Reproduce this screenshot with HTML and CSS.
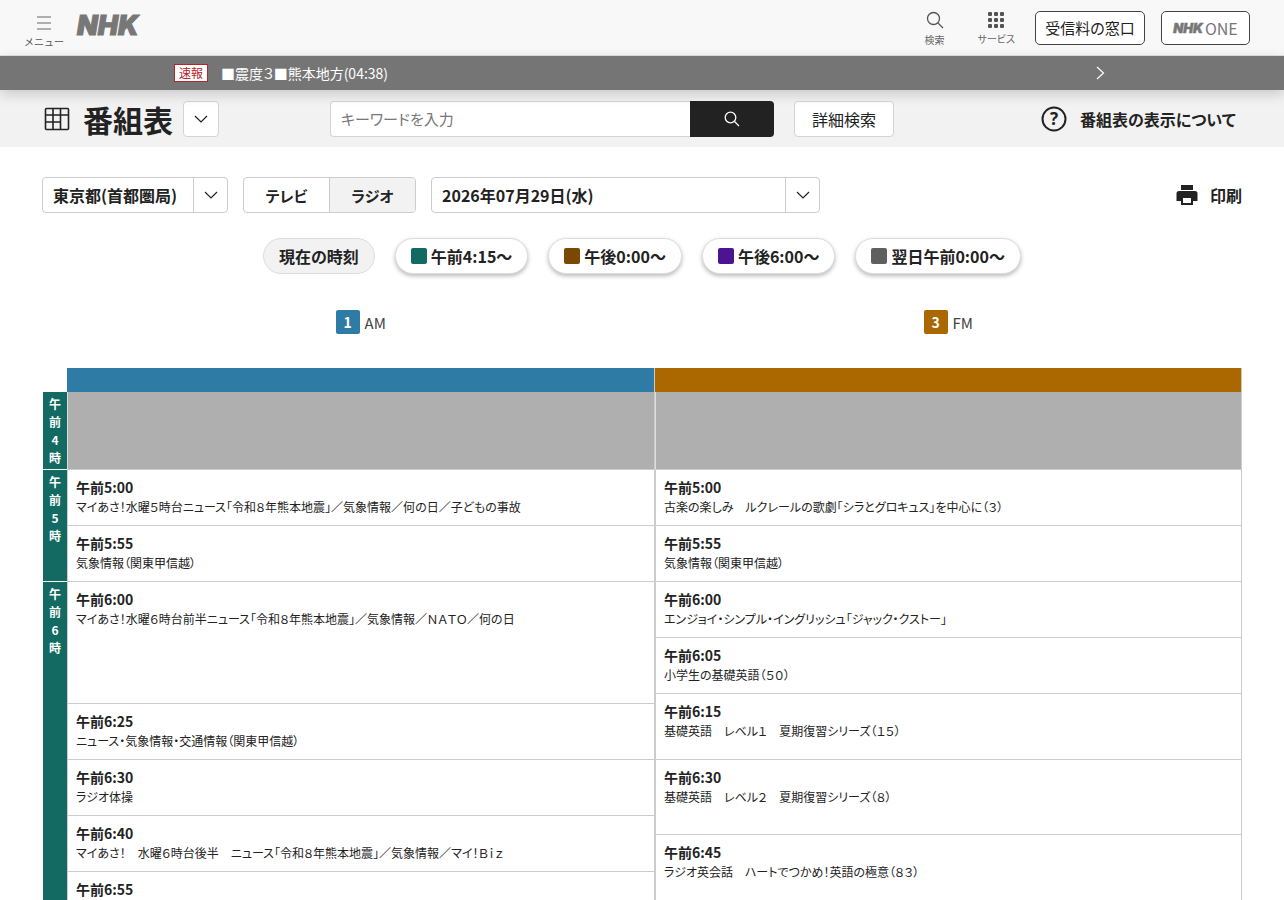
FILE: index.html
```html
<!DOCTYPE html>
<html lang="ja">
<head>
    <meta charset="UTF-8">
    <meta name="viewport" content="width=device-width, initial-scale=1.0">
    <title>番組表</title>
    <link rel="stylesheet" href="styles.css">
</head>
<body>
    <header class="site-header">
        <div class="header-left">
            <button class="menu-btn">
                <svg width="16" height="16" viewBox="0 0 16 16" fill="none" stroke="#666" stroke-width="1.2"><path d="M1 2h14M1 8h14M1 14h14"/></svg>
                <span>メニュー</span>
            </button>
            <span class="nhk-logo">NHK</span>
        </div>
        <div class="header-right">
            <div class="head-icon">
                <svg width="18" height="18" viewBox="0 0 18 18" fill="none" stroke="#555" stroke-width="1.3"><circle cx="7.5" cy="7.5" r="6"/><path d="M12 12l5 5"/></svg>
                <span>検索</span>
            </div>
            <div class="head-icon">
                <svg width="16" height="16" viewBox="0 0 16 16" fill="#555"><rect x="0" y="0" width="4" height="4" rx="1"/><rect x="6" y="0" width="4" height="4" rx="1"/><rect x="12" y="0" width="4" height="4" rx="1"/><rect x="0" y="6" width="4" height="4" rx="1"/><rect x="6" y="6" width="4" height="4" rx="1"/><rect x="12" y="6" width="4" height="4" rx="1"/><rect x="0" y="12" width="4" height="4" rx="1"/><rect x="6" y="12" width="4" height="4" rx="1"/><rect x="12" y="12" width="4" height="4" rx="1"/></svg>
                <span>サービス</span>
            </div>
            <a class="head-btn fee-btn">受信料の窓口</a>
            <a class="head-btn one-btn"><span class="nhk-small">NHK</span><span>ONE</span></a>
        </div>
    </header>

    <div class="news-bar">
        <span class="news-label">速報</span>
        <span class="news-text">■震度３■熊本地方(04:38)</span>
        <svg class="news-arrow" width="9" height="14" viewBox="0 0 9 14" fill="none" stroke="#fff" stroke-width="1.2"><path d="M1 1l6.500 6-6.500 6"/></svg>
    </div>

    <section class="title-bar">
        <div class="title-left">
            <svg width="26" height="24" viewBox="0 0 26 24" fill="none" stroke="#222" stroke-width="1.600"><rect x="1.500" y="1.500" width="23" height="21" rx="1"/><path d="M1.500 8h23M1.500 15h15M9 1.500v21M16.500 1.500v21"/></svg>
            <h1>番組表</h1>
            <button class="square-btn">
                <svg width="14" height="8" viewBox="0 0 14 8" fill="none" stroke="#222" stroke-width="1.200"><path d="M1 1l6 6 6-6"/></svg>
            </button>
        </div>
        <div class="search-box">
            <input type="text" placeholder="キーワードを入力">
            <button class="search-submit">
                <svg width="16" height="16" viewBox="0 0 16 16" fill="none" stroke="#fff" stroke-width="1.300"><circle cx="6.500" cy="6.500" r="5.300"/><path d="M10.500 10.500l4.500 4.500"/></svg>
            </button>
        </div>
        <button class="detail-btn">詳細検索</button>
        <div class="about-link">
            <svg width="26" height="26" viewBox="0 0 26 26"><circle cx="13" cy="13" r="11.500" fill="none" stroke="#222" stroke-width="2"/><text x="13" y="18.500" text-anchor="middle" class="about-mark">?</text></svg>
            <span>番組表の表示について</span>
        </div>
    </section>

    <main class="page-main">
        <div class="filters">
            <div class="select-box area-select">
                <span class="select-value">東京都(首都圏局)</span>
                <span class="select-arrow"><svg width="14" height="8" viewBox="0 0 14 8" fill="none" stroke="#222" stroke-width="1.200"><path d="M1 1l6 6 6-6"/></svg></span>
            </div>
            <div class="tabs">
                <span class="tab">テレビ</span>
                <span class="tab tab-active">ラジオ</span>
            </div>
            <div class="select-box date-select">
                <span class="select-value">2026年07月29日(水)</span>
                <span class="select-arrow"><svg width="14" height="8" viewBox="0 0 14 8" fill="none" stroke="#222" stroke-width="1.200"><path d="M1 1l6 6 6-6"/></svg></span>
            </div>
            <div class="print-link">
                <svg width="22" height="22" viewBox="0 0 22 22" fill="#222"><path d="M5 1h12v5H5z"/><path fill-rule="evenodd" d="M3 7h16a2.500 2.500 0 0 1 2.500 2.500V17H17v4H5v-4H.5V9.500A2.500 2.500 0 0 1 3 7zm4 7v5h8v-5z"/></svg>
                <span>印刷</span>
            </div>
        </div>

        <div class="time-jumps">
            <span class="pill pill-now">現在の時刻</span>
            <span class="pill"><i class="swatch swatch-morning"></i>午前4:15～</span>
            <span class="pill"><i class="swatch swatch-noon"></i>午後0:00～</span>
            <span class="pill"><i class="swatch swatch-evening"></i>午後6:00～</span>
            <span class="pill"><i class="swatch swatch-night"></i>翌日午前0:00～</span>
        </div>

        <div class="channel-names">
            <div class="channel-name"><span class="ch-badge ch-am">1</span>AM</div>
            <div class="channel-name"><span class="ch-badge ch-fm">3</span>FM</div>
        </div>

        <div class="schedule">
            <div class="hours">
                <div class="hour h-4"><span>午</span><span>前</span><span>4</span><span>時</span></div>
                <div class="hour h-5"><span>午</span><span>前</span><span>5</span><span>時</span></div>
                <div class="hour h-6"><span>午</span><span>前</span><span>6</span><span>時</span></div>
            </div>

            <div class="channel channel-am">
                <div class="channel-bar bar-am"></div>
                <div class="no-program"></div>
                <div class="program r56"><b>午前5:00</b><p>マイあさ！水曜５時台ニュース「令和８年熊本地震」／気象情報／何の日／子どもの事故</p></div>
                <div class="program r56"><b>午前5:55</b><p>気象情報（関東甲信越）</p></div>
                <div class="program r122"><b>午前6:00</b><p>マイあさ！水曜６時台前半ニュース「令和８年熊本地震」／気象情報／ＮＡＴＯ／何の日</p></div>
                <div class="program r56"><b>午前6:25</b><p>ニュース・気象情報・交通情報（関東甲信越）</p></div>
                <div class="program r56"><b>午前6:30</b><p>ラジオ体操</p></div>
                <div class="program r56"><b>午前6:40</b><p>マイあさ！　水曜６時台後半　ニュース「令和８年熊本地震」／気象情報／マイ！Ｂｉｚ</p></div>
                <div class="program r56"><b>午前6:55</b></div>
            </div>

            <div class="channel channel-fm">
                <div class="channel-bar bar-fm"></div>
                <div class="no-program"></div>
                <div class="program r56"><b>午前5:00</b><p>古楽の楽しみ　ルクレールの歌劇「シラとグロキュス」を中心に（３）</p></div>
                <div class="program r56"><b>午前5:55</b><p>気象情報（関東甲信越）</p></div>
                <div class="program r56"><b>午前6:00</b><p>エンジョイ・シンプル・イングリッシュ「ジャック・クストー」</p></div>
                <div class="program r56"><b>午前6:05</b><p>小学生の基礎英語（５０）</p></div>
                <div class="program r66"><b>午前6:15</b><p>基礎英語　レベル１　夏期復習シリーズ（１５）</p></div>
                <div class="program r75"><b>午前6:30</b><p>基礎英語　レベル２　夏期復習シリーズ（８）</p></div>
                <div class="program r75"><b>午前6:45</b><p>ラジオ英会話　ハートでつかめ！英語の極意（８３）</p></div>
            </div>
        </div>
    </main>
</body>
</html>
```

FILE: styles.css
```css
:root {
    --text: #222;
    --line: #ccc;
    --am: #2e7ca6;
    --fm: #ab6700;
    --morning: #136a62;
}

* {
    box-sizing: border-box;
    margin: 0;
    padding: 0;
}

html, body {
    height: 900px;
    overflow: hidden;
}

body {
    font-family: "Noto Sans CJK JP", "Noto Sans", sans-serif;
    font-feature-settings: "palt";
    color: var(--text);
    background-color: #fff;
}

/* header */
.site-header {
    display: flex;
    justify-content: space-between;
    align-items: center;
    height: 56px;
    padding: 0 34px 0 24px;
    background-color: #f8f8f8;
    border-bottom: 1px solid #e2e2e2;
}

.header-left {
    display: flex;
    align-items: center;
    gap: 13px;
}

.menu-btn {
    display: flex;
    flex-direction: column;
    align-items: center;
    gap: 5px;
    padding-top: 7px;
    border: none;
    background: none;
    font-family: inherit;
    font-size: 10px;
    line-height: 12px;
    color: #555;
}

.nhk-logo {
    font-family: "Inter", sans-serif;
    font-size: 27px;
    line-height: 30px;
    font-weight: 900;
    font-style: italic;
    letter-spacing: 0;
    color: #777;
    -webkit-text-stroke: 1px #777;
    margin-bottom: 3px;
}

.header-right {
    display: flex;
    align-items: center;
}

.head-icon {
    display: flex;
    flex-direction: column;
    align-items: center;
    gap: 4px;
    font-size: 10px;
    line-height: 14px;
    color: #666;
    padding-top: 3px;
}

.head-icon:nth-child(1) {
    margin-right: 33px;
}

.head-icon:nth-child(2) {
    margin-right: 20px;
}

.head-btn {
    display: flex;
    align-items: center;
    justify-content: center;
    height: 34px;
    background-color: #fff;
    border: 1px solid #444;
    border-radius: 5px;
    font-size: 15px;
}

.fee-btn {
    width: 110px;
    margin-right: 16px;
}

.one-btn {
    width: 89px;
    gap: 2px;
    color: #777;
    font-size: 16px;
}

.nhk-small {
    font-family: "Inter", sans-serif;
    font-size: 13px;
    font-weight: 900;
    font-style: italic;
    -webkit-text-stroke: 0.5px #777;
}

/* breaking news */
.news-bar {
    position: relative;
    z-index: 1;
    display: flex;
    align-items: center;
    height: 34px;
    padding-left: 174px;
    background-color: #757575;
    color: #fff;
    font-size: 14px;
    box-shadow: 0 4px 14px rgba(0, 0, 0, 0.18);
}

.news-label {
    width: 34px;
    height: 18px;
    margin-right: 13px;
    border: 1px solid #b3262b;
    background-color: #fff;
    color: #b3262b;
    font-size: 12px;
    line-height: 16px;
    text-align: center;
}

.news-arrow {
    position: absolute;
    left: 1096px;
    top: 10px;
}

/* title bar */
.title-bar {
    display: flex;
    align-items: center;
    height: 57px;
    padding-left: 44px;
    background-color: #f2f2f2;
}

.title-left {
    display: flex;
    align-items: center;
    width: 286px;
}

.title-left h1 {
    margin: 0 10px 0 13px;
    font-size: 30px;
    line-height: 40px;
    font-weight: 700;
}

.square-btn {
    display: flex;
    align-items: center;
    justify-content: center;
    width: 36px;
    height: 36px;
    background-color: #fff;
    border: 1px solid #d4d4d4;
    border-radius: 4px;
}

.search-box {
    display: flex;
    width: 444px;
    height: 36px;
}

.search-box input {
    flex: 1;
    min-width: 0;
    padding: 0 10px;
    border: 1px solid #d4d4d4;
    border-right: none;
    border-radius: 4px 0 0 4px;
    font-family: inherit;
    font-feature-settings: "palt";
    font-size: 15px;
}

.search-box input::placeholder {
    color: #777;
}

.search-submit {
    display: flex;
    align-items: center;
    justify-content: center;
    width: 84px;
    border: none;
    background-color: #222;
    border-radius: 0 4px 4px 0;
}

.detail-btn {
    width: 100px;
    height: 36px;
    margin-left: 20px;
    background-color: #fff;
    border: 1px solid #d4d4d4;
    border-radius: 4px;
    font-family: inherit;
    font-feature-settings: "palt";
    font-size: 16px;
    color: var(--text);
}

.about-link {
    display: flex;
    align-items: center;
    gap: 13px;
    margin-left: 147px;
    font-size: 16px;
    font-weight: 700;
}

.about-mark {
    font-family: "Noto Sans", sans-serif;
    font-size: 17px;
    font-weight: 700;
    fill: #222;
}

/* filters */
.page-main {
    padding: 30px 42px 0 42px;
}

.filters {
    display: flex;
    align-items: center;
}

.select-box {
    display: flex;
    align-items: center;
    height: 36px;
    background-color: #fff;
    border: 1px solid #ccc;
    border-radius: 4px;
    font-size: 16px;
    font-weight: 700;
}

.select-value {
    flex: 1;
    padding-left: 10px;
}

.select-arrow {
    display: flex;
    align-items: center;
    justify-content: center;
    width: 34px;
    height: 100%;
    border-left: 1px solid #ccc;
}

.area-select {
    width: 186px;
    margin-right: 15px;
}

.date-select {
    width: 389px;
}

.tabs {
    display: flex;
    width: 173px;
    height: 36px;
    margin-right: 15px;
    border: 1px solid #ccc;
    border-radius: 4px;
    overflow: hidden;
    font-size: 15px;
    font-weight: 700;
}

.tab {
    display: flex;
    flex: 1;
    align-items: center;
    justify-content: center;
}

.tab-active {
    background-color: #f2f2f2;
    border-left: 1px solid #ccc;
}

.print-link {
    display: flex;
    align-items: center;
    gap: 12px;
    margin-left: auto;
    font-size: 16px;
    font-weight: 700;
}

.time-jumps {
    display: flex;
    justify-content: center;
    gap: 20px;
    margin-top: 25px;
}

.pill {
    display: flex;
    align-items: center;
    height: 36px;
    padding: 0 15px;
    background-color: #fff;
    border: 1px solid #ddd;
    border-radius: 18px;
    font-size: 16px;
    font-weight: 700;
    box-shadow: 0 2px 4px rgba(0, 0, 0, 0.28);
}

.pill-now {
    background-color: #f2f2f2;
    box-shadow: none;
}

.swatch {
    width: 16px;
    height: 16px;
    margin-right: 4px;
    border-radius: 2px;
}

.swatch-morning { background-color: var(--morning); }
.swatch-noon { background-color: #7c4700; }
.swatch-evening { background-color: #4b1590; }
.swatch-night { background-color: #5f5f5f; }

.channel-names {
    display: flex;
    margin: 36px 0 0 25px;
}

.channel-name {
    display: flex;
    flex: 1;
    align-items: center;
    justify-content: center;
    gap: 5px;
    height: 24px;
    font-size: 15px;
    color: #444;
}

.ch-badge {
    width: 24px;
    height: 24px;
    border-radius: 2px;
    color: #fff;
    font-size: 14px;
    font-weight: 700;
    line-height: 24px;
    text-align: center;
}

.ch-am { background-color: var(--am); }
.ch-fm { background-color: var(--fm); }

/* schedule */
.schedule {
    display: flex;
    margin-top: 34px;
}

.hours {
    width: 25px;
    padding: 24px 0 0 1px;
}

.hour {
    display: flex;
    flex-direction: column;
    align-items: center;
    padding: 3px 0 0 0;
    background-color: var(--morning);
    border-bottom: 1px solid #fff;
    color: #fff;
    font-size: 12px;
    font-weight: 700;
}

.hour span {
    height: 18px;
    line-height: 18px;
}

.h-4 { height: 78px; }
.h-5 { height: 112px; }
.h-6 { height: 340px; }

.channel {
    border-right: 1px solid var(--line);
}

.channel-am { width: 588px; }
.channel-fm { width: 587px; }

.channel-bar {
    height: 24px;
}

.bar-am { background-color: var(--am); }
.bar-fm { background-color: var(--fm); }

.no-program {
    height: 78px;
    background-color: #afafaf;
    border-left: 1px solid #ddd;
    border-bottom: 1px solid var(--line);
}

.program {
    padding: 7px 8px 0;
    border-left: 1px solid var(--line);
    border-bottom: 1px solid var(--line);
    overflow: hidden;
}

.program b {
    display: block;
    font-size: 14px;
    line-height: 20px;
}

.program p {
    font-size: 12px;
    line-height: 19px;
}

.r56 { height: 56px; }
.r66 { height: 66px; }
.r75 { height: 75px; }
.r122 { height: 122px; }
```
